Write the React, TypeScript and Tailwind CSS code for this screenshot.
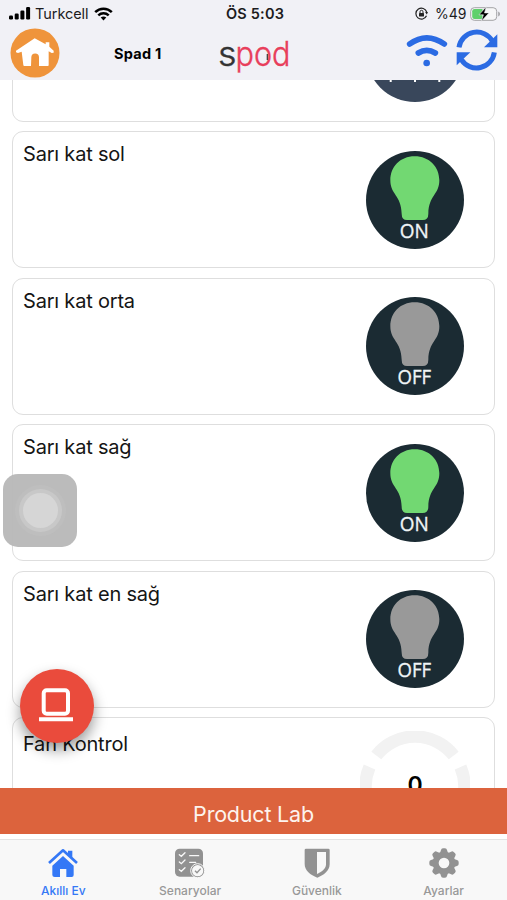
import { ReactNode } from "react"

function StatusBar() {
  return (
    <div className="flex h-[27px] items-center justify-between pl-[9px] pr-[6px] text-[14px] leading-[27px] text-[#1c1c1e]">
      <div className="flex w-[180px] items-center">
        <svg className="h-[13px] w-[22px]" viewBox="0 0 22 13" fill="#000">
          <rect x="0" y="8.5" width="4" height="4" rx="1.2" />
          <rect x="5.7" y="6.5" width="4" height="6" rx="1.2" />
          <rect x="11.4" y="3.5" width="4" height="9" rx="1.2" />
          <rect x="17.1" y="0" width="4" height="12.5" rx="1.2" />
        </svg>
        <span className="ml-[4px] w-[54px] whitespace-nowrap text-[14.5px] tracking-[-0.05px]">Turkcell</span>
        <svg className="ml-[5px] h-[14px] w-[19px]" viewBox="0 0 19 14" fill="none" stroke="#000" strokeWidth="2.5">
          <path d="M1.2 5.2C5.8 0.6 13.2 0.6 17.8 5.2" />
          <path d="M4.3 8.4C7.3 5.6 11.7 5.6 14.7 8.4" />
          <path d="M9.5 13.6L6.7 10.6C8.4 9.2 10.6 9.2 12.3 10.6Z" fill="#000" stroke="none" />
        </svg>
      </div>
      <span className="whitespace-nowrap text-[14.5px] font-semibold tracking-[0.2px]">ÖS 5:03</span>
      <div className="flex w-[180px] items-center justify-end">
        <svg className="h-[13px] w-[13px]" viewBox="0 0 13 13" fill="none" stroke="#222" strokeWidth="1.2">
          <path d="M11.7 5A5.5 5.5 0 1 0 11.5 8.8" />
          <path d="M10.1 5.1L13 5.1L11.8 7.6Z" fill="#222" stroke="none" />
          <rect x="4" y="6" width="5" height="3.5" rx=".5" fill="#222" stroke="none" />
          <path d="M5 6V4.8A1.5 1.5 0 0 1 8 4.8V6" strokeWidth="1" />
        </svg>
        <span className="ml-[7px] w-[32px] whitespace-nowrap">%49</span>
        <svg className="ml-[3px] h-[16px] w-[31px]" viewBox="0 0 31 16">
          <rect x=".7" y="1.7" width="26" height="12.6" rx="3.6" fill="#f7f7f8" stroke="#a3a3a6" />
          <path d="M4.5 3H12.5V13H4.5Q2.2 13 2.2 10.8V5.2Q2.2 3 4.5 3Z" fill="#5fd06c" />
          <path d="M28.2 5.5Q30 6.2 30 8T28.2 10.5Z" fill="#a3a3a6" />
          <path d="M16.2 .8L9 8.8H13.4L11.3 15.2L19 6.9H14.5Z" fill="#000" stroke="#f2f1f6" strokeWidth=".6" />
        </svg>
      </div>
    </div>
  )
}

function Header() {
  return (
    <header className="h-[80px] shrink-0 bg-[#f1f1f6]">
      <StatusBar />
      <div className="flex h-[53px] items-start pl-[10px] pr-[9px]">
        <svg className="mt-px h-[50px] w-[50px]" viewBox="0 0 150 150">
          <circle cx="75" cy="75" r="73.5" fill="#ef943b" />
          <path
            d="M74 31L107 49V43H118V56L131 68V74L125 75L116 70V112Q116 114 113 114H87V88A11 11 0 0 0 64 88L63 114H43Q40 114 40 111L35 71L24 75L18 73V68Z"
            fill="#fff"
          />
        </svg>
        <span className="ml-[54px] mt-[16px] w-[103px] whitespace-nowrap text-[14.5px] font-bold leading-[22px] tracking-[0.25px] text-black">
          Spad 1
        </span>
        <svg className="h-[53px] w-[74px]" viewBox="217 27 74 53" fontFamily="Inter, sans-serif" fontSize="34" fontWeight="300">
          <text x="218" y="66" fill="#333" textLength="18.5" lengthAdjust="spacingAndGlyphs" stroke="#333" strokeWidth=".4">s</text>
          <text x="235.5" y="66" fill="#e83e5b" textLength="55" lengthAdjust="spacingAndGlyphs" stroke="#e83e5b" strokeWidth=".4">pod</text>
          <path d="M267.3 54V60" stroke="#333" strokeWidth="1.2" />
        </svg>
        <svg className="ml-[115px] mt-[7px] h-[34px] w-[42px]" viewBox="456 101 126 102" fill="none" stroke="#2b6be3" strokeWidth="17" strokeLinecap="round">
          <path d="M467 131Q518 94 571 131" />
          <path d="M493 158Q518 142 544 158" />
          <circle cx="518" cy="188" r="10" fill="#2b6be3" stroke="none" />
        </svg>
        <svg className="ml-[8px] mt-[2px] h-[42px] w-[42px]" viewBox="607 88 126 126" fill="#2b6be3">
          <path d="M616 143A54 54 0 0 1 716 124" fill="none" stroke="#2b6be3" strokeWidth="15" />
          <path d="M731 104V143H691Z" />
          <path d="M722 158A54 54 0 0 1 623 180" fill="none" stroke="#2b6be3" strokeWidth="15" />
          <path d="M609 197V158H650Z" />
        </svg>
      </div>
    </header>
  )
}

function LightSwitch({ on }: { on: boolean }) {
  return (
    <svg className="h-[98px] w-[98px]" viewBox="80 77 294 294">
      <circle cx="227" cy="224" r="147" fill="#1b2b33" />
      <path
        d="M226 93C270 93 300 125 300 165C300 208 268 210 267 265Q267 284 250 284H203Q187 284 187 265C186 210 153 208 153 165C153 125 182 93 226 93Z"
        fill={on ? "#72d872" : "#999"}
      />
      <text
        x="225"
        y="338"
        fill="#f0f5f7"
        stroke="#f0f5f7"
        strokeWidth="1"
        fontFamily="'Open Sans', sans-serif"
        fontSize="58"
        textAnchor="middle"
        textLength={on ? 87 : 101}
        lengthAdjust="spacingAndGlyphs"
      >
        {on ? "ON" : "OFF"}
      </text>
    </svg>
  )
}

function Card({ title, children }: { title?: string; children: ReactNode }) {
  return (
    <div className="flex h-[137px] shrink-0 justify-between rounded-[11px] border border-[#dedede] bg-white pl-[10px] pr-[30px]">
      <span className="mt-[9px] whitespace-nowrap text-[20px] leading-[27px] tracking-[-0.2px] text-[#151515]">{title}</span>
      {children}
    </div>
  )
}

function FanDial() {
  return (
    <svg className="mr-[-6px] mt-[13px] h-[112px] w-[110px]" viewBox="0 0 110 112">
      <g fill="none" stroke="#f2f2f2" strokeWidth="12.5">
        <path d="M16.3 24.5A49 49 0 0 1 93.7 24.5" />
        <path d="M9.5 36A49 49 0 0 0 9.5 74" />
        <path d="M100.5 36A49 49 0 0 1 100.5 74" />
      </g>
      <text x="55" y="62" fontSize="23" fontWeight="600" textAnchor="middle">0</text>
    </svg>
  )
}

const lights = [
  { title: "Sarı kat sol", on: true },
  { title: "Sarı kat orta", on: false },
  { title: "Sarı kat sağ", on: true },
  { title: "Sarı kat en sağ", on: false },
]

const tabs = [
  {
    label: "Akıllı Ev",
    active: true,
    icon: (
      <svg className="h-[30px] w-[32px]" viewBox="146 204 96 90" fill="#3478f6">
        <path d="M152 249L194 211L236 249" fill="none" stroke="#3478f6" strokeWidth="8" strokeLinejoin="round" />
        <path d="M209 212H222V233L209 222Z" />
        <path d="M194 228L226 257V285Q226 291 220 291H204V267H185V291H169Q162 291 162 285V257Z" />
      </svg>
    ),
  },
  {
    label: "Senaryolar",
    icon: (
      <svg className="h-[30px] w-[32px]" viewBox="525 204 96 90" fill="none">
        <rect x="528" y="206" width="84" height="84" rx="14" fill="#929292" />
        <g stroke="#f8f8f8" strokeWidth="4" strokeLinecap="round">
          <path d="M541 224L547 229L558 218M541 246L547 251L558 240M541 269L547 274L558 263" />
          <path d="M572 227H599M572 247H590" />
        </g>
        <circle cx="596" cy="272" r="21" fill="#929292" stroke="#f8f8f8" strokeWidth="3" />
        <circle cx="596" cy="272" r="17" fill="#f8f8f8" />
        <path d="M588 272L594 278L605 266" stroke="#929292" strokeWidth="4" />
      </svg>
    ),
  },
  {
    label: "Güvenlik",
    icon: (
      <svg className="h-[30px] w-[32px]" viewBox="142 204 96 90">
        <path d="M157 206H224Q228 206 228 210V252C228 272 211 285 191 293C170 285 153 272 153 252V210Q153 206 157 206Z" fill="#929292" />
        <path d="M190 216H217V253C217 266 206 275 190 282Z" fill="#f8f8f8" />
      </svg>
    ),
  },
  {
    label: "Ayarlar",
    icon: (
      <svg className="h-[30px] w-[32px]" viewBox="-48 -45 96 90" fill="#929292">
        <circle r="25" fill="none" stroke="#929292" strokeWidth="18" />
        <g>
          {[0, 45, 90, 135, 180, 225, 270, 315].map((angle) => (
            <path key={angle} transform={`rotate(${angle})`} d="M-12 -30L-9 -39Q-8 -44 -3 -44H3Q8 -44 9 -39L12 -30Z" />
          ))}
        </g>
      </svg>
    ),
  },
]

export default function App() {
  return (
    <div className="relative flex h-[900px] w-[507px] flex-col overflow-hidden bg-white font-['Inter',sans-serif]">
      <Header />

      <main className="flex min-h-0 flex-1 flex-col overflow-hidden pl-[12px] pr-[12px]">
        <div className="mt-[-95.5px] flex flex-col gap-[9.6px]">
          <Card>
            <svg className="mt-[18px] h-[98px] w-[98px]" viewBox="0 0 98 98">
              <circle cx="49" cy="49" r="49" fill="#39475b" />
              <path d="M24.7 70V78M49 70V78M73.3 70V78" stroke="#fff" strokeWidth="2" />
            </svg>
          </Card>
          {lights.map((light) => (
            <Card key={light.title} title={light.title}>
              <div className="mt-[18.5px]">
                <LightSwitch on={light.on} />
              </div>
            </Card>
          ))}
          <div className="flex h-[137px] shrink-0 justify-between rounded-[11px] border border-[#dedede] pl-[10px] pr-[30px]">
            <span className="mt-[13px] text-[20px] leading-[27px] tracking-[-0.2px] text-[#151515]">Fan Kontrol</span>
            <FanDial />
          </div>
        </div>
      </main>

      <div className="flex h-[46px] shrink-0 items-center justify-center bg-[#dc633d] pt-[6px] text-[21.5px] tracking-[-0.2px] text-[#fdf3ee]">
        Product Lab
      </div>
      <nav className="mt-[5px] grid h-[61px] shrink-0 grid-cols-4 border-t border-[#e4e4e4] bg-[#f8f8f8]">
        {tabs.map((tab) => (
          <div key={tab.label} className="flex flex-col items-center pt-[8px]">
            {tab.icon}
            <span
              className={
                tab.active
                  ? "mt-[5px] text-[12px] font-medium leading-[16px] text-[#3478f6]"
                  : "mt-[5px] text-[12px] font-medium leading-[16px] text-[#989898]"
              }
            >
              {tab.label}
            </span>
          </div>
        ))}
      </nav>

      {/* assistive touch */}
      <div className="absolute left-[3px] top-[474px] flex h-[73px] w-[74px] items-center justify-center rounded-[15px] bg-[#b7b7b7]/95">
        <div className="flex h-[51px] w-[51px] items-center justify-center rounded-full bg-[#bebebe]">
          <div className="flex h-[43px] w-[43px] items-center justify-center rounded-full bg-[#c8c8c8]">
            <div className="h-[35px] w-[35px] rounded-full bg-[#d6d6d6]" />
          </div>
        </div>
      </div>

      <button className="absolute left-[20px] top-[669px] flex h-[74px] w-[74px] items-center justify-center rounded-full bg-[#ea4b3c] pb-[3px] pr-[2px] shadow-[0_7px_14px_rgba(0,0,0,0.4)]">
        <svg className="h-[36px] w-[36px]" viewBox="0 0 36 36" fill="none" stroke="#fff">
          <rect x="5.7" y="3.2" width="24.3" height="23.5" rx="3" strokeWidth="4" />
          <path d="M1 32.2H35" strokeWidth="4" />
        </svg>
      </button>
    </div>
  )
}
